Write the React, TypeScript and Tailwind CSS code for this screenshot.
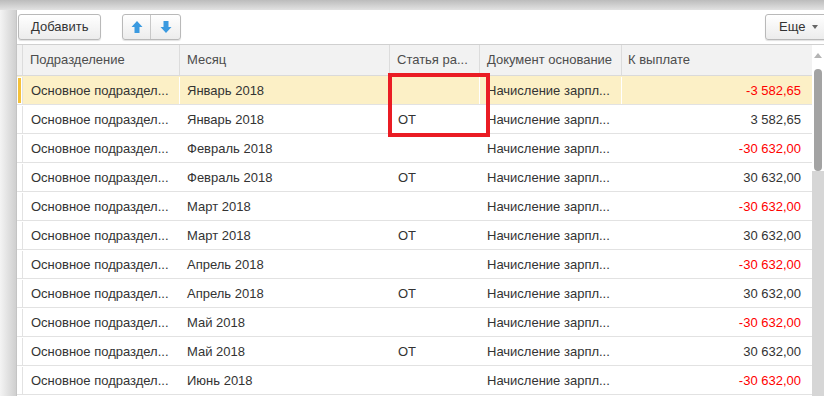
import React from 'react';

type Row = { month: string; article: string; amount: string; negative: boolean };

const rows: Row[] = [
  { month: 'Январь 2018', article: '', amount: '-3 582,65', negative: true },
  { month: 'Январь 2018', article: 'ОТ', amount: '3 582,65', negative: false },
  { month: 'Февраль 2018', article: '', amount: '-30 632,00', negative: true },
  { month: 'Февраль 2018', article: 'ОТ', amount: '30 632,00', negative: false },
  { month: 'Март 2018', article: '', amount: '-30 632,00', negative: true },
  { month: 'Март 2018', article: 'ОТ', amount: '30 632,00', negative: false },
  { month: 'Апрель 2018', article: '', amount: '-30 632,00', negative: true },
  { month: 'Апрель 2018', article: 'ОТ', amount: '30 632,00', negative: false },
  { month: 'Май 2018', article: '', amount: '-30 632,00', negative: true },
  { month: 'Май 2018', article: 'ОТ', amount: '30 632,00', negative: false },
  { month: 'Июнь 2018', article: '', amount: '-30 632,00', negative: true },
];

function ArrowUp() {
  return (
    <svg width="12" height="14" viewBox="0 0 12 14">
      <path d="M6 1 L11.5 7 L8.5 7 L8.5 13 L3.5 13 L3.5 7 L0.5 7 Z" fill="#3a9ae0" />
    </svg>
  );
}

function ArrowDown() {
  return (
    <svg width="12" height="14" viewBox="0 0 12 14">
      <path d="M6 13 L11.5 7 L8.5 7 L8.5 1 L3.5 1 L3.5 7 L0.5 7 Z" fill="#3a9ae0" />
    </svg>
  );
}

const btn =
  'h-[26px] border border-[#b9b9b9] rounded-[3px] bg-gradient-to-b from-white to-[#ececec] shadow-[0_1px_1px_rgba(0,0,0,0.12)] flex items-center';

export default function App() {
  return (
    <div className="w-[824px] h-[396px] overflow-hidden flex flex-col bg-[#e4e4e4] font-['Liberation_Sans',Arial,sans-serif] text-[13px] text-[#333]">
      {/* window shadow at the top */}
      <div className="h-[10px] shrink-0 bg-gradient-to-b from-[#bcbcbc] to-[#e2e2e2]" />

      <div className="flex flex-1 min-h-0">
        {/* shadow on the left */}
        <div className="w-[16px] shrink-0 bg-gradient-to-r from-[#f4f4f4] to-[#cfcfcf]" />

        <div className="relative flex-1 bg-white border-l border-[#c4c4c4] flex flex-col">
          {/* toolbar */}
          <div className="flex items-center h-[34px] pt-[4px] pb-[4px] pl-[1px]">
            <button className={`${btn} px-[12px] text-[#333]`}>Добавить</button>
            <div className={`${btn} ml-[21px]`}>
              <span className="w-[28px] h-full flex items-center justify-center border-r border-[#c8c8c8]">
                <ArrowUp />
              </span>
              <span className="w-[29px] h-full flex items-center justify-center">
                <ArrowDown />
              </span>
            </div>
            <div className="flex-1" />
            <button className={`${btn} w-[70px] pl-[13px] gap-[7px] -mr-[11px]`}>
              <span>Еще</span>
              <span className="w-0 h-0 border-l-[3px] border-r-[3px] border-t-[4px] border-l-transparent border-r-transparent border-t-[#666]" />
            </button>
          </div>

          {/* table */}
          <div className="flex flex-1 min-h-0 border-t border-[#d0d0d0]">
            <div className="flex flex-col w-[795px] shrink-0">
              <div className="flex h-[31px] shrink-0 bg-[#f2f2f2] border-b border-[#dadada] text-[#4d4d4d]">
                <div className="w-[6px] border-r border-[#dcdcdc]" />
                <div className="w-[157px] border-r border-[#dcdcdc] pl-[7px] flex items-center">Подразделение</div>
                <div className="w-[210px] border-r border-[#dcdcdc] pl-[7px] flex items-center">Месяц</div>
                <div className="w-[90px] border-r border-[#dcdcdc] pl-[7px] flex items-center">Статья ра...</div>
                <div className="w-[142px] border-r border-[#dcdcdc] pl-[7px] flex items-center">Документ основание</div>
                <div className="w-[190px] pl-[6px] flex items-center">К выплате</div>
              </div>

              {rows.map((r, i) => {
                const active = i === 0;
                return (
                  <div
                    key={i}
                    className={`flex h-[29px] shrink-0 border-b border-[#e2e2e2] pt-[1px] ${active ? 'bg-[#fcf0c6]' : 'bg-white'}`}
                  >
                    <div className="w-[6px] border-r border-[#e2e2e2] flex items-stretch py-[1px] bg-white">
                      {active && <div className="ml-[1px] w-[3px] bg-[#f4c13a]" />}
                    </div>
                    <div className="w-[157px] border-r border-white pl-[8px] flex items-center whitespace-nowrap">Основное подраздел...</div>
                    <div className="w-[210px] border-r border-white pl-[7px] flex items-center whitespace-nowrap">{r.month}</div>
                    <div className="w-[90px] border-r border-white pl-[8px] flex items-center">{r.article}</div>
                    <div className="w-[142px] border-r border-white pl-[7px] flex items-center whitespace-nowrap">Начисление зарпл...</div>
                    <div className={`w-[190px] pr-[11px] flex items-center justify-end ${r.negative ? 'text-[#ff0000]' : ''}`}>
                      {r.amount}
                    </div>
                  </div>
                );
              })}
            </div>

            {/* scrollbar */}
            <div className="flex flex-col flex-1">
              <div className="h-[24px] bg-white flex justify-center pt-[8px]">
                <span className="w-0 h-0 border-l-[4px] border-r-[4px] border-b-[5px] border-l-transparent border-r-transparent border-b-[#b4b4b4]" />
              </div>
              <div className="h-[102px] bg-white pl-[2px] pr-[1px]">
                <div className="h-full w-[8px] rounded-[4px] bg-[#a3a3a3]" />
              </div>
              <div className="flex-1 bg-[#d6d6d6]" />
            </div>
          </div>

          {/* red marker around the column */}
          <div className="absolute left-[371px] top-[63px] w-[102px] h-[64px] border-[4px] border-[#ea1c24]" />
        </div>
      </div>
    </div>
  );
}
